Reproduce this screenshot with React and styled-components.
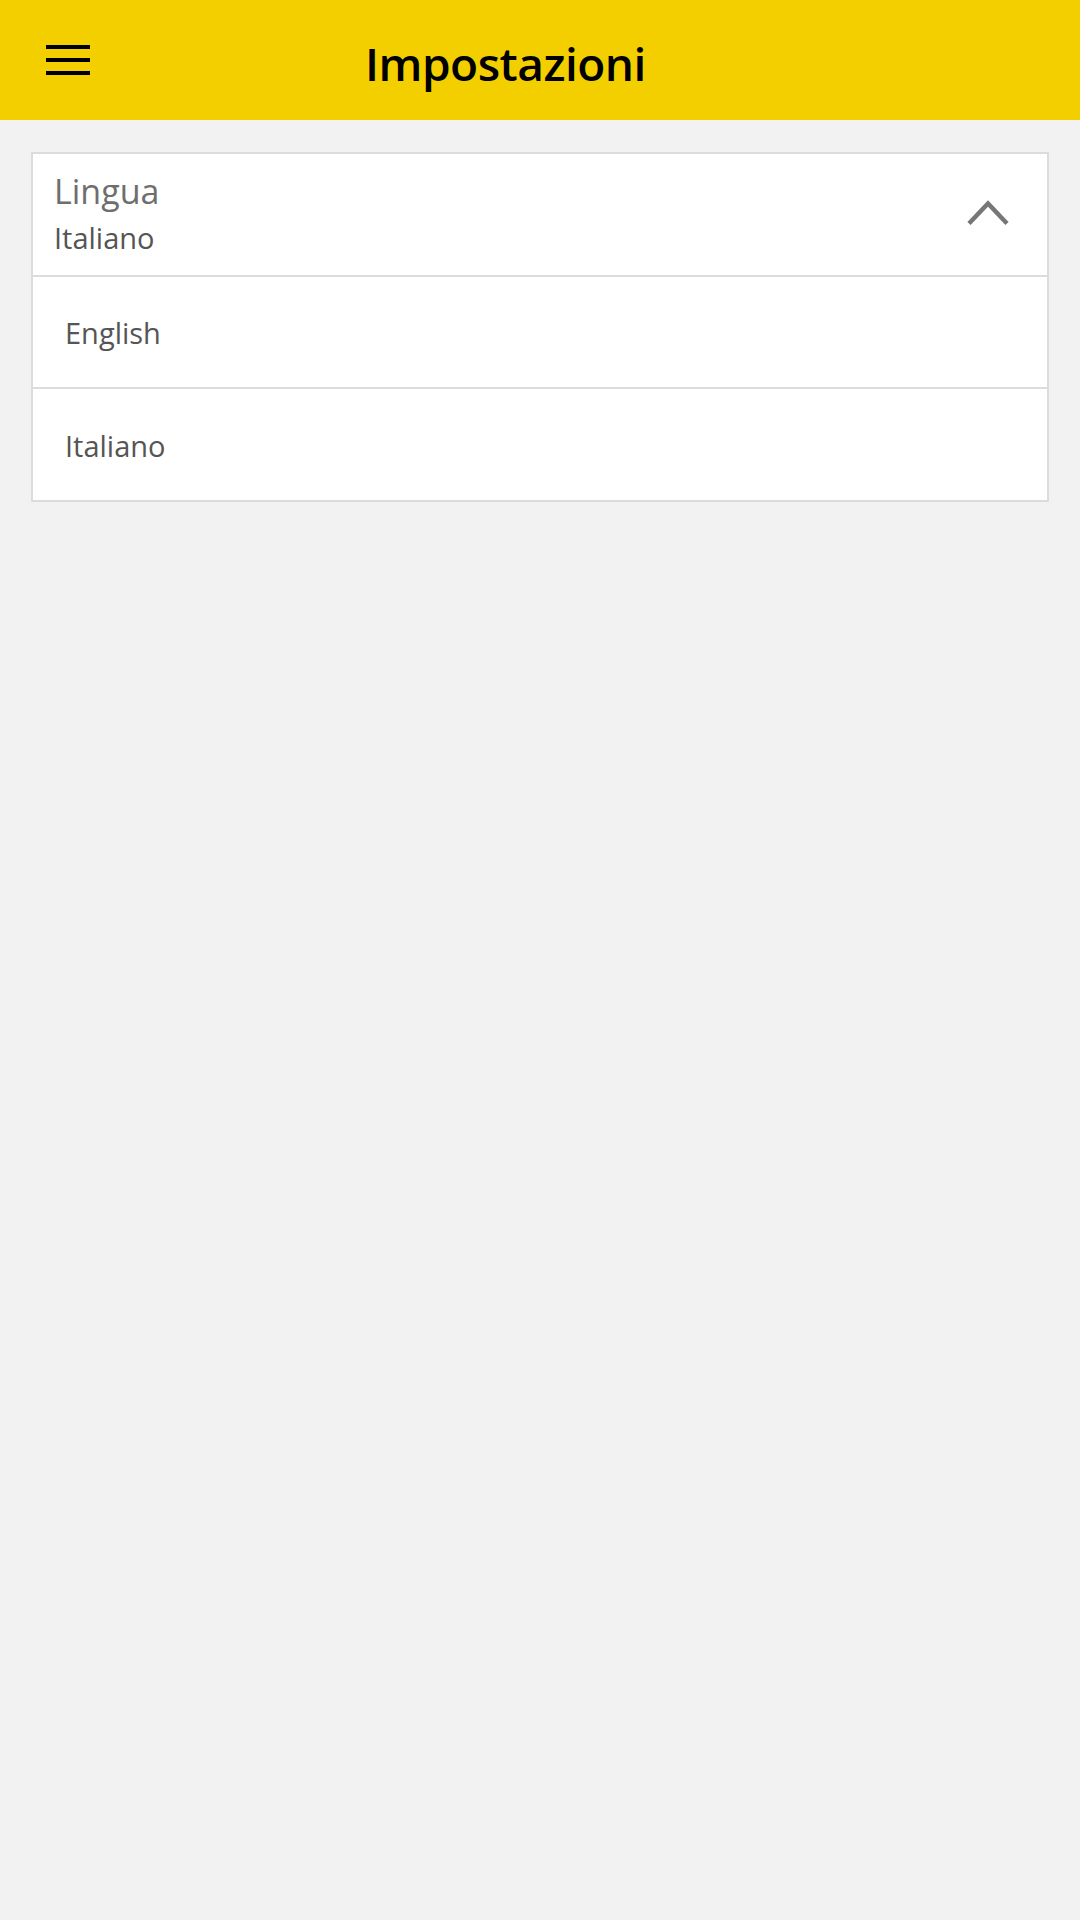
import React from 'react';
import styled, { createGlobalStyle } from 'styled-components';

const GlobalStyle = createGlobalStyle`
  html, body {
    margin: 0;
    padding: 0;
    background: #f2f2f2;
    font-family: 'Open Sans', 'Noto Sans', sans-serif;
  }
`;

const Page = styled.div`
  width: 1080px;
  min-height: 1920px;
  background: #f2f2f2;
`;

const TopBar = styled.header`
  display: flex;
  align-items: center;
  height: 120px;
  background: #f4cf00;
  box-sizing: border-box;
  padding-left: 46px;
`;

const MenuButton = styled.button`
  display: flex;
  flex-direction: column;
  gap: 9px;
  width: 44px;
  padding: 0;
  margin: 0;
  border: none;
  background: none;
  cursor: pointer;
`;

const MenuBar = styled.span`
  display: block;
  width: 44px;
  height: 4px;
  background: #000;
`;

const Title = styled.h1`
  margin: 0 0 0 275px;
  padding-top: 6px;
  font-size: 46px;
  line-height: 60px;
  font-weight: 600;
  color: #000;
  letter-spacing: -0.5px;
`;

const Content = styled.main`
  padding: 32px 31px;
`;

const Dropdown = styled.section`
  border: 2px solid #dcdcdc;
  background: #fff;
`;

const DropdownHead = styled.div`
  display: flex;
  align-items: center;
  justify-content: space-between;
  height: 123px;
  box-sizing: border-box;
  padding: 0 38px 0 21px;
  border-bottom: 2px solid #dcdcdc;
`;

const HeadText = styled.div`
  display: flex;
  flex-direction: column;
  margin-top: -2px;
`;

const Label = styled.span`
  font-size: 34px;
  line-height: 40px;
  color: #6e6e6e;
`;

const Value = styled.span`
  margin-top: 9px;
  font-size: 29px;
  line-height: 36px;
  color: #555;
`;

const Option = styled.div`
  display: flex;
  align-items: center;
  height: ${p => (p.last ? '111px' : '112px')};
  box-sizing: border-box;
  padding: 1px 0 0 32px;
  font-size: 29px;
  color: #555;
  border-bottom: ${p => (p.last ? 'none' : '2px solid #dcdcdc')};
`;

const Chevron = () => (
  <svg width="42" height="26" viewBox="0 0 42 26" style={{ marginTop: '-4px' }}>
    <polyline points="2,23.5 21,3.5 40,23.5" fill="none" stroke="#777" strokeWidth="4.5" />
  </svg>
);

const languages = ['English', 'Italiano'];

export default function App() {
  return (
    <Page>
      <GlobalStyle />
      <TopBar>
        <MenuButton aria-label="menu">
          <MenuBar />
          <MenuBar />
          <MenuBar />
        </MenuButton>
        <Title>Impostazioni</Title>
      </TopBar>
      <Content>
        <Dropdown>
          <DropdownHead>
            <HeadText>
              <Label>Lingua</Label>
              <Value>Italiano</Value>
            </HeadText>
            <Chevron />
          </DropdownHead>
          {languages.map((l, i) => (
            <Option key={l} last={i === languages.length - 1}>{l}</Option>
          ))}
        </Dropdown>
      </Content>
    </Page>
  );
}
